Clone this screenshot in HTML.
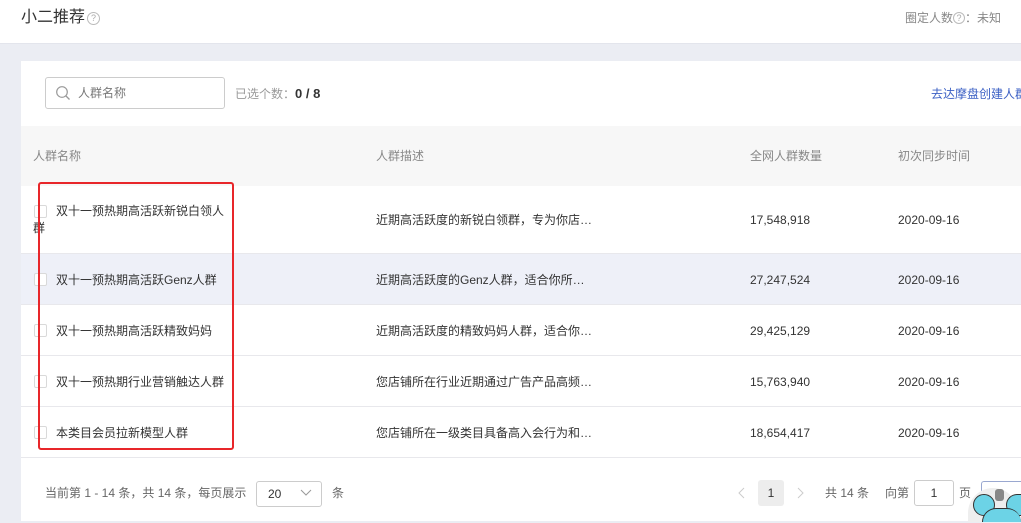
<!DOCTYPE html><html style="width:1021px;height:523px;overflow:hidden"><head><meta charset="utf-8"><style>
*{margin:0;padding:0;box-sizing:border-box}
body{width:1021px;height:523px;overflow:hidden;background:#ebedf3;font-family:"Liberation Sans","Noto Sans CJK SC",sans-serif;font-size:12px;color:#333;position:relative}
.top{position:absolute;left:0;top:0;width:1021px;height:44px;background:#fff;border-bottom:1px solid #e3e5ec}
.abs{position:absolute;white-space:nowrap;line-height:16px}
.q{display:inline-block;width:12px;height:12px;border:1px solid #bbb;border-radius:50%;font-size:9px;line-height:10px;text-align:center;color:#aaa;vertical-align:1px}
.card{position:absolute;left:21px;top:61px;width:1000px;height:460px;background:#fff}
.hdr{position:absolute;left:21px;top:126px;width:1000px;height:60px;background:#f7f7f7;color:#888}
.row{position:absolute;left:21px;width:1000px;border-bottom:1px solid #e8e8ec}
.cb{position:absolute;left:13px;width:13px;height:13px;border:1px solid #d9d9d9;border-radius:2px;background:#fff}
.m{position:absolute}
</style></head><body>
<div class="top"></div>
<div class="abs" style="left:21px;top:8px;font-size:16px;line-height:20px;color:#333">小二推荐<span class="q" style="margin-left:2px;width:13px;height:13px">?</span></div>
<div class="abs" style="left:905px;top:10px;color:#888">圈定人数<span class="q">?</span>：未知</div>
<div class="card"></div>
<div class="abs" style="left:45px;top:77px;width:180px;height:32px;border:1px solid #ccc;border-radius:3px"></div>
<svg class="abs" style="left:55px;top:85px" width="16" height="16" viewBox="0 0 16 16"><circle cx="7" cy="7" r="5.3" fill="none" stroke="#999" stroke-width="1.2"/><path d="M11 11l3.5 3.5" stroke="#999" stroke-width="1.3"/></svg>
<div class="abs" style="left:78px;top:85px;color:#777">人群名称</div>
<div class="abs" style="left:235px;top:86px;color:#999">已选个数：<b style="color:#333;font-size:13px">0 / 8</b></div>
<div class="abs" style="left:931px;top:86px;color:#3a5fc4">去达摩盘创建人群</div>
<div class="hdr"></div>
<div class="abs" style="left:33px;top:148px;color:#888">人群名称</div>
<div class="abs" style="left:376px;top:148px;color:#888">人群描述</div>
<div class="abs" style="left:750px;top:148px;color:#888">全网人群数量</div>
<div class="abs" style="left:898px;top:148px;color:#888">初次同步时间</div>

<div class="row" style="top:186px;height:68px"><div class="cb" style="top:19px"></div></div>
<div class="abs" style="left:56px;top:203px">双十一预热期高活跃新锐白领人</div>
<div class="abs" style="left:33px;top:220px">群</div>
<div class="abs" style="left:376px;top:212px">近期高活跃度的新锐白领群，专为你店…</div>
<div class="abs" style="left:750px;top:212px">17,548,918</div>
<div class="abs" style="left:898px;top:212px">2020-09-16</div>

<div class="row" style="top:254px;height:51px;background:#eef0f8"><div class="cb" style="top:19px"></div></div>
<div class="abs" style="left:56px;top:272px">双十一预热期高活跃Genz人群</div>
<div class="abs" style="left:376px;top:272px">近期高活跃度的Genz人群，适合你所…</div>
<div class="abs" style="left:750px;top:272px">27,247,524</div>
<div class="abs" style="left:898px;top:272px">2020-09-16</div>

<div class="row" style="top:305px;height:51px"><div class="cb" style="top:19px"></div></div>
<div class="abs" style="left:56px;top:323px">双十一预热期高活跃精致妈妈</div>
<div class="abs" style="left:376px;top:323px">近期高活跃度的精致妈妈人群，适合你…</div>
<div class="abs" style="left:750px;top:323px">29,425,129</div>
<div class="abs" style="left:898px;top:323px">2020-09-16</div>

<div class="row" style="top:356px;height:51px"><div class="cb" style="top:19px"></div></div>
<div class="abs" style="left:56px;top:374px">双十一预热期行业营销触达人群</div>
<div class="abs" style="left:376px;top:374px">您店铺所在行业近期通过广告产品高频…</div>
<div class="abs" style="left:750px;top:374px">15,763,940</div>
<div class="abs" style="left:898px;top:374px">2020-09-16</div>

<div class="row" style="top:407px;height:51px"><div class="cb" style="top:19px"></div></div>
<div class="abs" style="left:56px;top:425px">本类目会员拉新模型人群</div>
<div class="abs" style="left:376px;top:425px">您店铺所在一级类目具备高入会行为和…</div>
<div class="abs" style="left:750px;top:425px">18,654,417</div>
<div class="abs" style="left:898px;top:425px">2020-09-16</div>

<div class="abs" style="left:38px;top:182px;width:196px;height:268px;border:2px solid #e8262a;border-radius:3px"></div>

<div class="abs" style="left:45px;top:485px;color:#666">当前第 1 - 14 条，共 14 条，每页展示</div>
<div class="abs" style="left:256px;top:481px;width:66px;height:26px;border:1px solid #ccc;border-radius:3px;padding:4px 0 0 11px;color:#333">20</div>
<svg class="abs" style="left:300px;top:489px" width="12" height="8"><path d="M1 1l5 5 5-5" fill="none" stroke="#999"/></svg>
<div class="abs" style="left:332px;top:485px;color:#666">条</div>
<svg class="abs" style="left:737px;top:487px" width="8" height="12"><path d="M7 1L2 6l5 5" fill="none" stroke="#ccc"/></svg>
<div class="abs" style="left:758px;top:480px;width:26px;height:26px;background:#ededed;border-radius:3px;text-align:center;line-height:26px">1</div>
<svg class="abs" style="left:797px;top:487px" width="8" height="12"><path d="M1 1l5 5-5 5" fill="none" stroke="#ccc"/></svg>
<div class="abs" style="left:825px;top:485px;color:#666">共 14 条</div>
<div class="abs" style="left:885px;top:485px;color:#666">向第</div>
<div class="abs" style="left:914px;top:480px;width:40px;height:26px;border:1px solid #ccc;border-radius:3px;text-align:center;line-height:24px">1</div>
<div class="abs" style="left:959px;top:485px;color:#666">页</div>
<div class="abs" style="left:981px;top:481px;width:40px;height:26px;border:1px solid #9aa8d0;border-right:none;border-radius:3px 0 0 3px"></div>
<div style="position:absolute;left:966px;top:484px;width:55px;height:38px;overflow:hidden">
<div class="m" style="left:2px;top:4px;width:50px;height:34px;border-radius:25px 25px 0 0;background:#eee"></div>
<div class="m" style="left:7px;top:10px;width:22px;height:22px;border-radius:50%;background:#6cd3e6;border:1.5px solid #333"></div>
<div class="m" style="left:40px;top:10px;width:15px;height:22px;border-radius:11px 0 0 11px;background:#6cd3e6;border:1.5px solid #333;border-right:none"></div>
<div class="m" style="left:16px;top:24px;width:39px;height:14px;border-radius:20px 20px 0 0;background:#6cd3e6;border:1.5px solid #333;border-bottom:none;border-right:none"></div>
<div class="m" style="left:29px;top:5px;width:9px;height:12px;background:#888;border-radius:3px"></div>
</div>
</body></html>
